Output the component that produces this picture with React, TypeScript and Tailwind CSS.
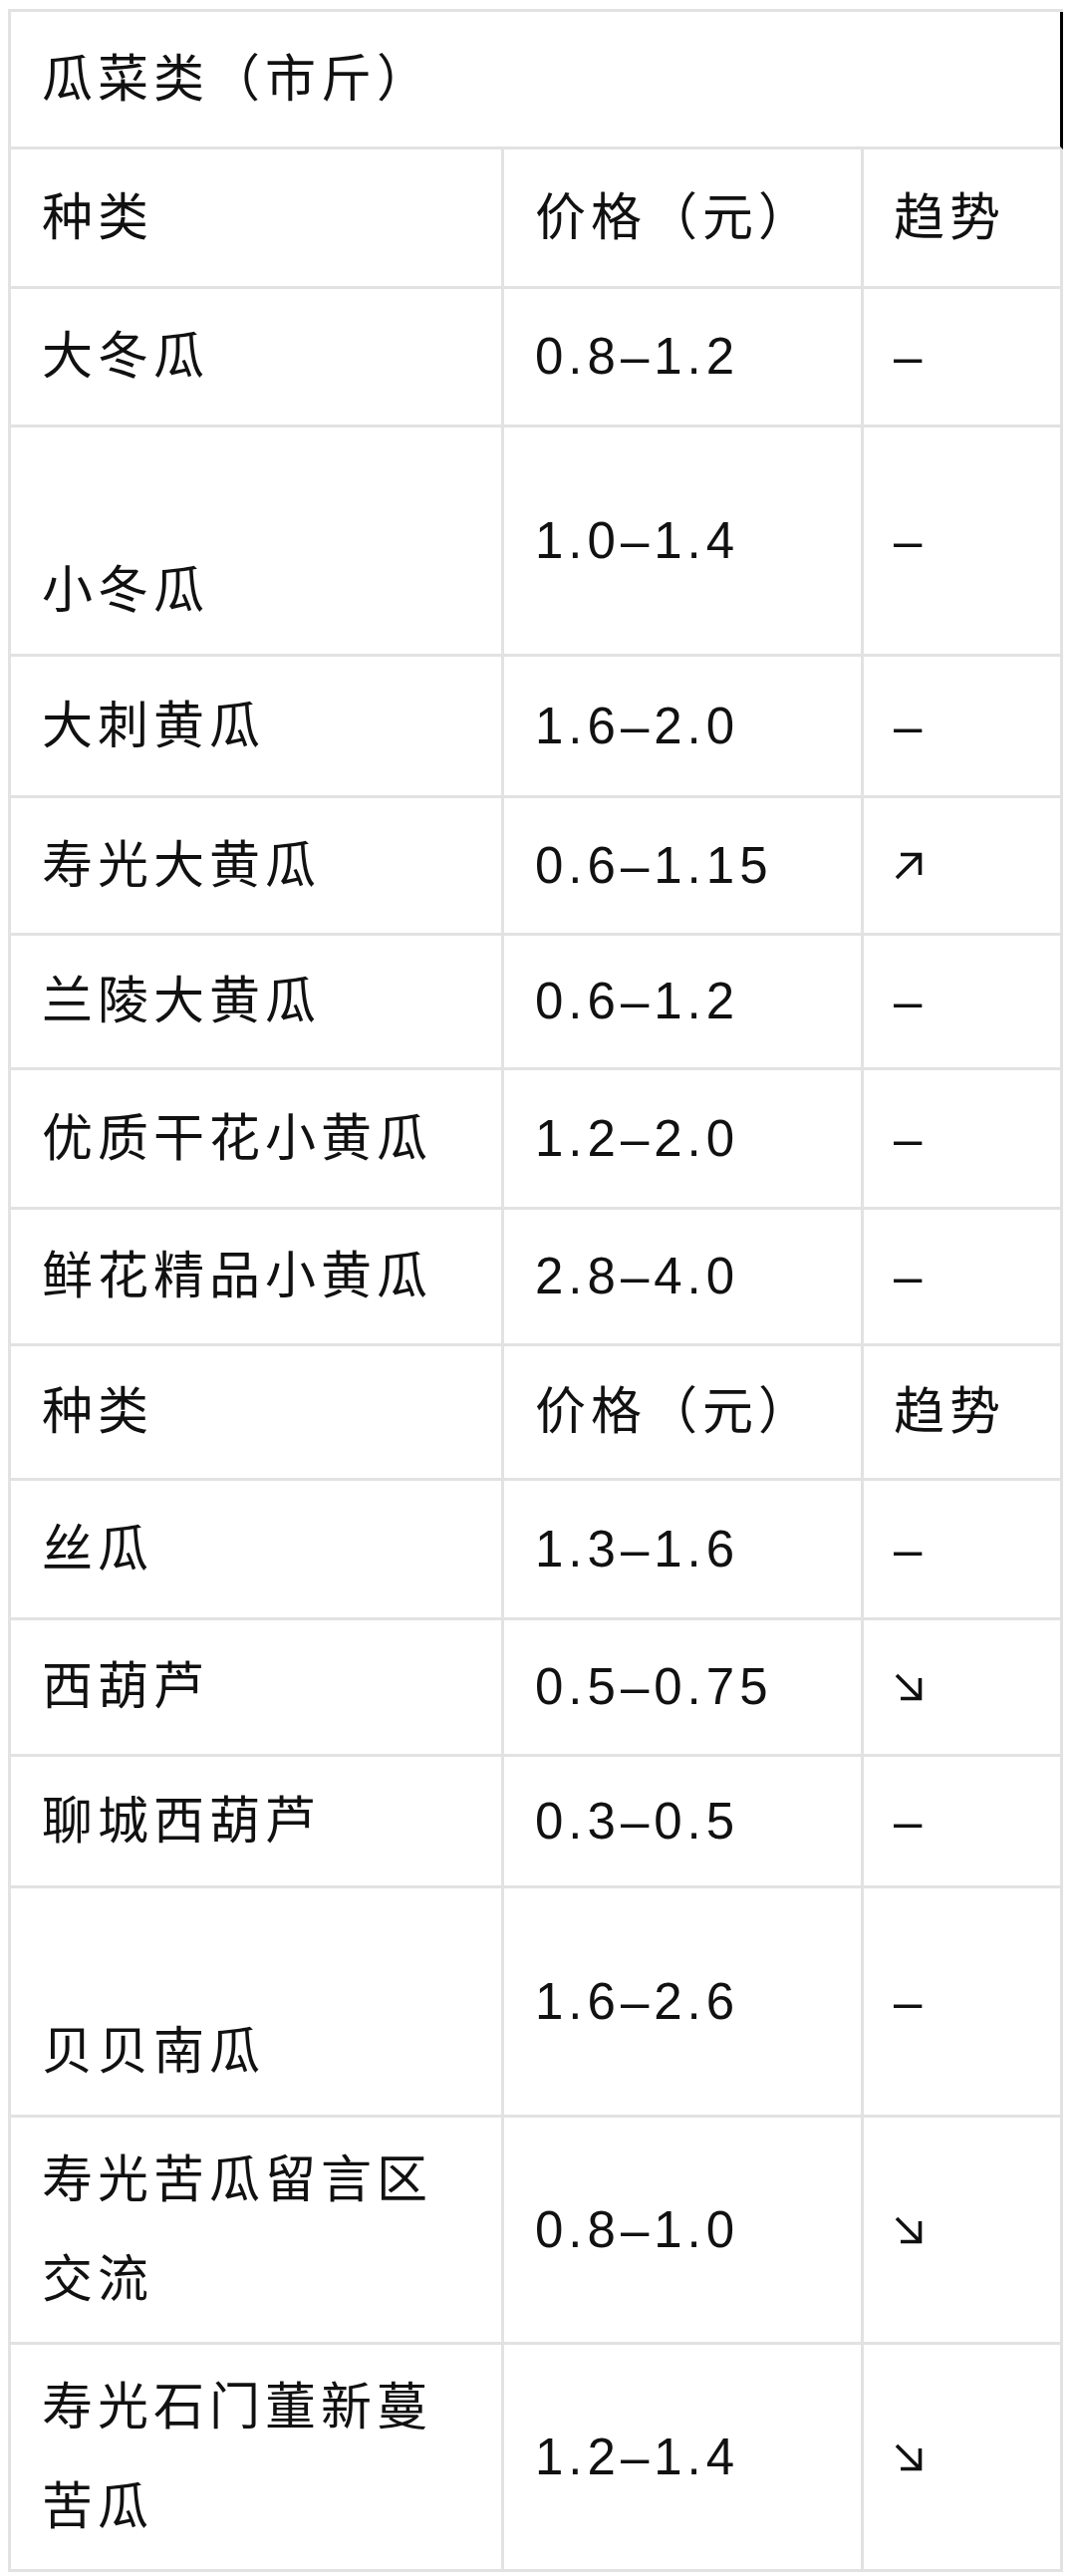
import React from "react";

type Trend = "flat" | "up" | "down";

type Row = {
  name: string[];
  price: string;
  trend: Trend;
  h: string;
  header?: boolean;
};

const ROWS: Row[] = [
  { name: ["种类"], price: "价格（元）", trend: "flat", h: "h-[140px]", header: true },
  { name: ["大冬瓜"], price: "0.8–1.2", trend: "flat", h: "h-[139px]" },
  { name: ["", "小冬瓜"], price: "1.0–1.4", trend: "flat", h: "h-[230px]" },
  { name: ["大刺黄瓜"], price: "1.6–2.0", trend: "flat", h: "h-[142px]" },
  { name: ["寿光大黄瓜"], price: "0.6–1.15", trend: "up", h: "h-[138px]" },
  { name: ["兰陵大黄瓜"], price: "0.6–1.2", trend: "flat", h: "h-[135px]" },
  { name: ["优质干花小黄瓜"], price: "1.2–2.0", trend: "flat", h: "h-[140px]" },
  { name: ["鲜花精品小黄瓜"], price: "2.8–4.0", trend: "flat", h: "h-[137px]" },
  { name: ["种类"], price: "价格（元）", trend: "flat", h: "h-[135px]", header: true },
  { name: ["丝瓜"], price: "1.3–1.6", trend: "flat", h: "h-[140px]" },
  { name: ["西葫芦"], price: "0.5–0.75", trend: "down", h: "h-[137px]" },
  { name: ["聊城西葫芦"], price: "0.3–0.5", trend: "flat", h: "h-[132px]" },
  { name: ["", "贝贝南瓜"], price: "1.6–2.6", trend: "flat", h: "h-[230px]" },
  { name: ["寿光苦瓜留言区", "交流"], price: "0.8–1.0", trend: "down", h: "h-[228px]" },
  { name: ["寿光石门董新蔓", "苦瓜"], price: "1.2–1.4", trend: "down", h: "h-[228px]" },
];

function TrendMark({ trend }: { trend: Trend }) {
  if (trend === "up") {
    return (
      <svg width="30" height="30" viewBox="0 0 30 30" className="block">
        <path d="M3 27 L26 4 M7 3.5 H26.5 V24" fill="none" stroke="#111" strokeWidth="3.6" />
      </svg>
    );
  }
  if (trend === "down") {
    return (
      <svg width="30" height="30" viewBox="0 0 30 30" className="block">
        <path d="M3 3 L26 26 M26.5 6 V26.5 H7" fill="none" stroke="#111" strokeWidth="3.6" />
      </svg>
    );
  }
  return <span>–</span>;
}

export default function App() {
  return (
    <div className="min-h-[2585px] bg-white pt-[9px] pl-[8px] text-[51px] tracking-[5px] text-[#111]"
         style={{ fontFamily: '"Liberation Sans", "Noto Sans CJK SC", sans-serif' }}>
      <div className="w-[1059px] border-l-[3px] border-t-[3px] border-[#e2e2e2]">
        {/* Title */}
        <div className="flex h-[138px] items-center border-b-[3px] border-r-[3px] border-b-[#e2e2e2] border-r-black pl-[31px] leading-[100px]">
          瓜菜类（市斤）
        </div>

        {ROWS.map((row, i) => (
          <div key={i} className={`flex border-b-[3px] border-[#e2e2e2] ${row.h}`}>
            <div className="flex w-[495px] flex-col justify-center border-r-[3px] border-[#e2e2e2] pl-[31px] leading-[100px]">
              {row.name.map((line, j) => (
                <div key={j} className="h-[100px]">{line}</div>
              ))}
            </div>
            <div className="flex w-[361px] items-center border-r-[3px] border-[#e2e2e2] pl-[31px] leading-[100px]">
              {row.price}
            </div>
            <div className="flex w-[200px] items-center border-r-[3px] border-[#e2e2e2] pl-[30px] leading-[100px]">
              {row.header ? "趋势" : <TrendMark trend={row.trend} />}
            </div>
          </div>
        ))}
      </div>
    </div>
  );
}
